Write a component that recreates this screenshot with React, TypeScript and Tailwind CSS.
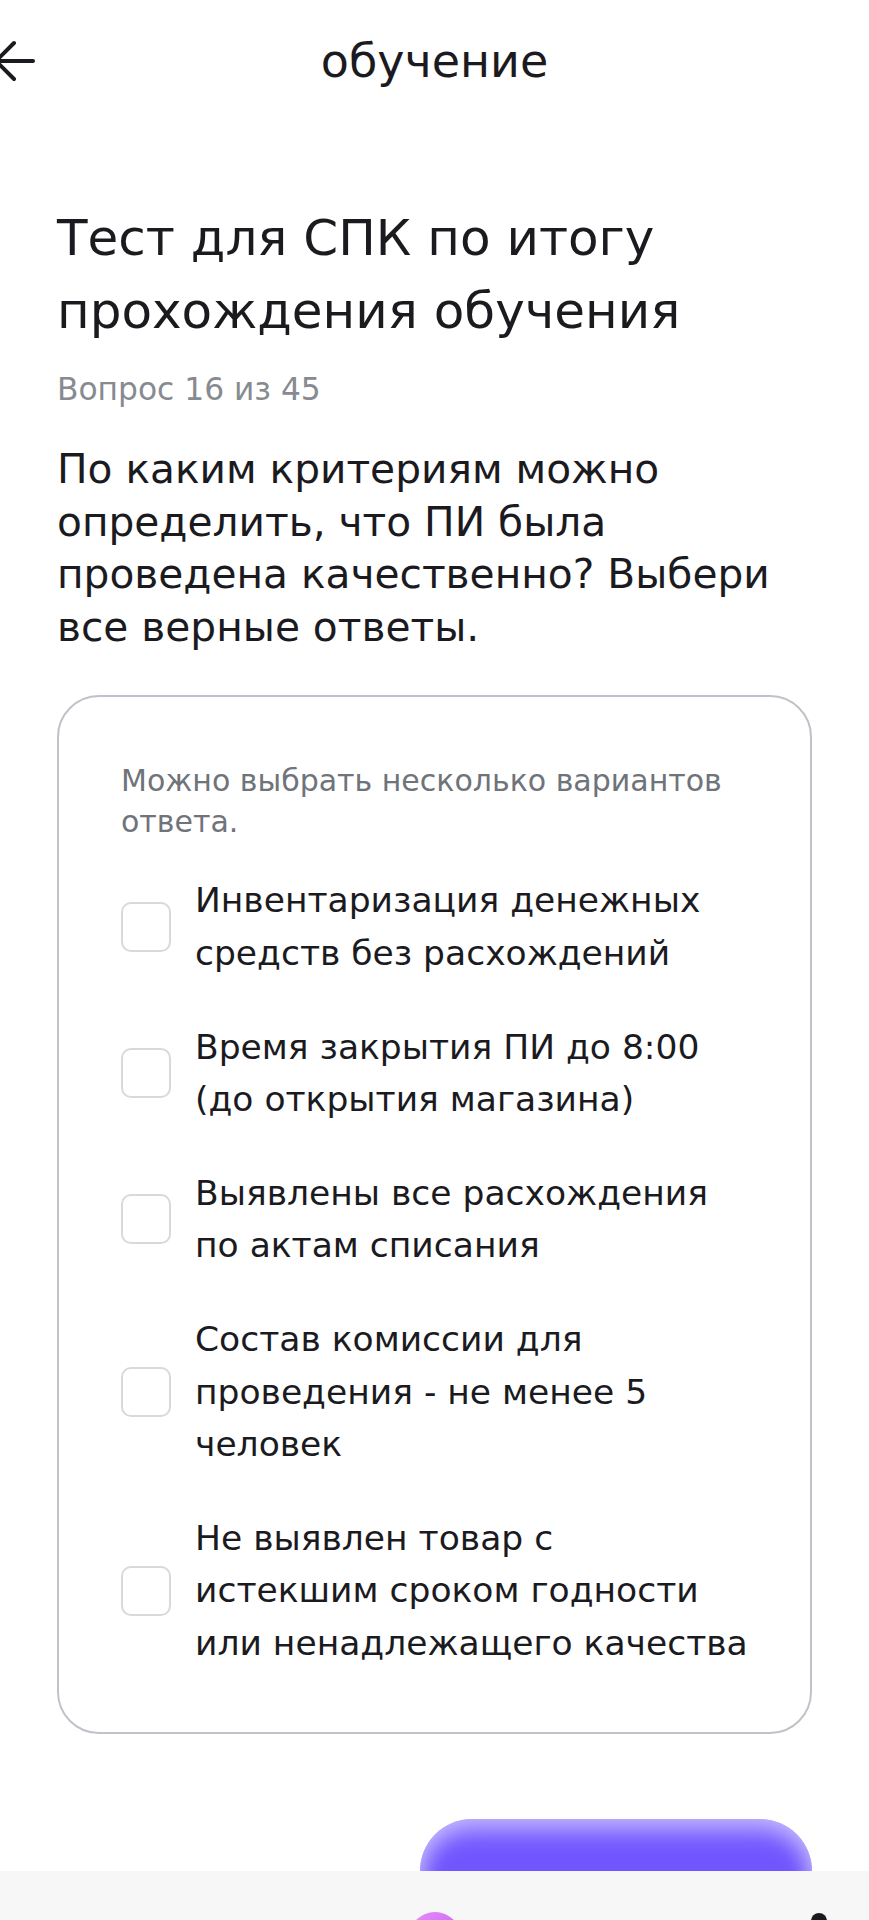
import React from "react";

const options: string[][] = [
  ["Инвентаризация денежных", "средств без расхождений"],
  ["Время закрытия ПИ до 8:00", "(до открытия магазина)"],
  ["Выявлены все расхождения", "по актам списания"],
  ["Состав комиссии для", "проведения - не менее 5", "человек"],
  ["Не выявлен товар с", "истекшим сроком годности", "или ненадлежащего качества"],
];

export default function App() {
  return (
    <div className="relative h-[1920px] overflow-hidden bg-white text-[#1b1b1f] font-['DejaVu_Sans',sans-serif]">
      {/* header */}
      <div className="grid h-[122px] grid-cols-[1fr_auto_1fr] items-center">
        <div className="-ml-[8px] flex items-center">
          <svg width="48" height="48" viewBox="0 0 48 48" fill="none">
            <path
              d="M4 24 L41 24 M4 24 L22 6 M4 24 L22 42"
              stroke="#1b1b1f"
              strokeWidth="4"
              strokeLinecap="round"
              strokeLinejoin="round"
            />
          </svg>
        </div>
        <div className="text-[46px] leading-[56px]">обучение</div>
        <div />
      </div>

      {/* content */}
      <div className="px-[57px]">
        <h1 className="mt-[80px] text-[50px] leading-[73px] font-normal">
          Тест для СПК по итогу
          <br />
          прохождения обучения
        </h1>
        <div className="mt-[21px] text-[31.3px] leading-[40px] text-[#878a90]">
          Вопрос 16 из 45
        </div>
        <div className="mt-[34px] text-[40.7px] leading-[52.6px]">
          По каким критериям можно
          <br />
          определить, что ПИ была
          <br />
          проведена качественно? Выбери
          <br />
          все верные ответы.
        </div>

        {/* card */}
        <div className="mt-[42px] h-[1039px] rounded-[42px] border-2 border-[#bfc2c8] px-[62px] pt-[63px]">
          <div className="text-[30px] leading-[41px] text-[#6f737a]">
            Можно выбрать несколько вариантов
            <br />
            ответа.
          </div>
          <div className="mt-[32px] flex flex-col gap-[41px]">
            {options.map((lines, i) => (
              <div key={i} className="flex items-center gap-[24px]">
                <div className="h-[50px] w-[50px] shrink-0 rounded-[10px] border-2 border-[#d9d9dc] bg-white" />
                <div className="whitespace-nowrap text-[34.5px] leading-[52.6px]">
                  {lines.map((l, j) => (
                    <div key={j}>{l}</div>
                  ))}
                </div>
              </div>
            ))}
          </div>
        </div>

        {/* button */}
        <div className="mt-[85px] flex justify-end">
          <button className="h-[104px] w-[392px] rounded-full bg-[#7155ff] shadow-[inset_0_14px_22px_rgba(255,255,255,0.4),inset_0_0_22px_rgba(255,255,255,0.4)]" />
        </div>
      </div>

      {/* bottom bar */}
      <div className="absolute bottom-0 left-0 right-0 h-[49px] overflow-hidden bg-[#f7f7f8]">
        <div className="grid h-full grid-cols-[1fr_auto_1fr]">
          <div />
          <div className="pt-[41px]">
            <div className="h-[52px] w-[52px] rounded-full bg-[linear-gradient(135deg,#ec8cf8,#b65cf2)]" />
          </div>
          <div className="flex justify-end pr-[42px] pt-[42px]">
            <div className="h-[16px] w-[16px] rounded-full bg-[#1b1b1f]" />
          </div>
        </div>
      </div>
    </div>
  );
}
